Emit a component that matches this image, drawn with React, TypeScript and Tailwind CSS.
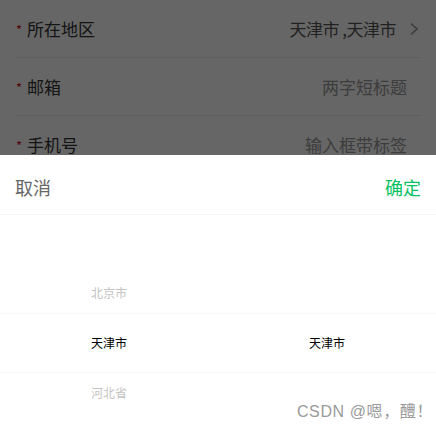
import React from "react";

const font = { fontFamily: '"Noto Sans CJK SC", "Noto Sans", sans-serif' };

function Row({ label, value, valueClass, arrow }: { label: string; value: string; valueClass: string; arrow?: boolean }) {
  return (
    <div className="mx-[15px] h-[58px] flex items-center border-b border-[#ececec]">
      <span className="w-[12px] text-[#d0101e] text-[13px] leading-none pl-[1px] pt-[1px]">*</span>
      <span className="text-[17px] text-[#333] leading-none">{label}</span>
      <span className={`ml-auto text-[17px] leading-none ${valueClass} ${arrow ? "" : "mr-[14px]"}`}>{value}</span>
      {arrow && (
        <svg width="10" height="14" viewBox="0 0 10 14" className="ml-[13px] mr-[2px]">
          <path d="M2 1.5 L8 7 L2 12.5" fill="none" stroke="#969799" strokeWidth="1.6" />
        </svg>
      )}
    </div>
  );
}

export default function App() {
  const col1 = ["北京市", "天津市", "河北省"];
  return (
    <div className="relative w-[436px] h-[429px] overflow-hidden bg-white" style={font}>
      <div className="flex flex-col">
        <Row label="所在地区" value="天津市 ,天津市" valueClass="text-[#555] tracking-[-0.5px]" arrow />
        <Row label="邮箱" value="两字短标题" valueClass="text-[#999]" />
        <Row label="手机号" value="输入框带标签" valueClass="text-[#999]" />
      </div>
      <div className="absolute inset-0 bg-black/60" />
      <div className="absolute left-0 right-0 top-[155px] bottom-0 bg-white flex flex-col">
        <div className="h-[60px] flex items-center justify-between px-[15px] pt-[4px] border-b border-[#f4f4f4]">
          <span className="text-[18px] text-[#666] leading-none">取消</span>
          <span className="text-[18px] text-[#07c160] leading-none">确定</span>
        </div>
        <div className="relative flex-1">
          <div className="grid grid-cols-2 pt-[53px]">
            <div className="flex flex-col items-center">
              {col1.map((t, i) => (
                <div key={t} className={`h-[50px] flex items-center text-[12px] ${i === 1 ? "text-black" : "text-[#c4c4c4]"}`}>
                  {t}
                </div>
              ))}
            </div>
            <div className="flex flex-col items-center pt-[50px]">
              <div className="h-[50px] flex items-center text-[12px] text-black">天津市</div>
            </div>
          </div>
          <div className="absolute left-0 right-0 top-[98px] h-[60px] border-y border-[#f8f8f8]" />
          <div className="absolute right-[3px] bottom-[9px] text-[16px] text-[#9a9a9a] leading-none tracking-[0.6px]" style={{ fontFamily: '"Liberation Sans", "Noto Sans CJK SC", sans-serif' }}>
            CSDN @嗯，醴！
          </div>
        </div>
      </div>
    </div>
  );
}
